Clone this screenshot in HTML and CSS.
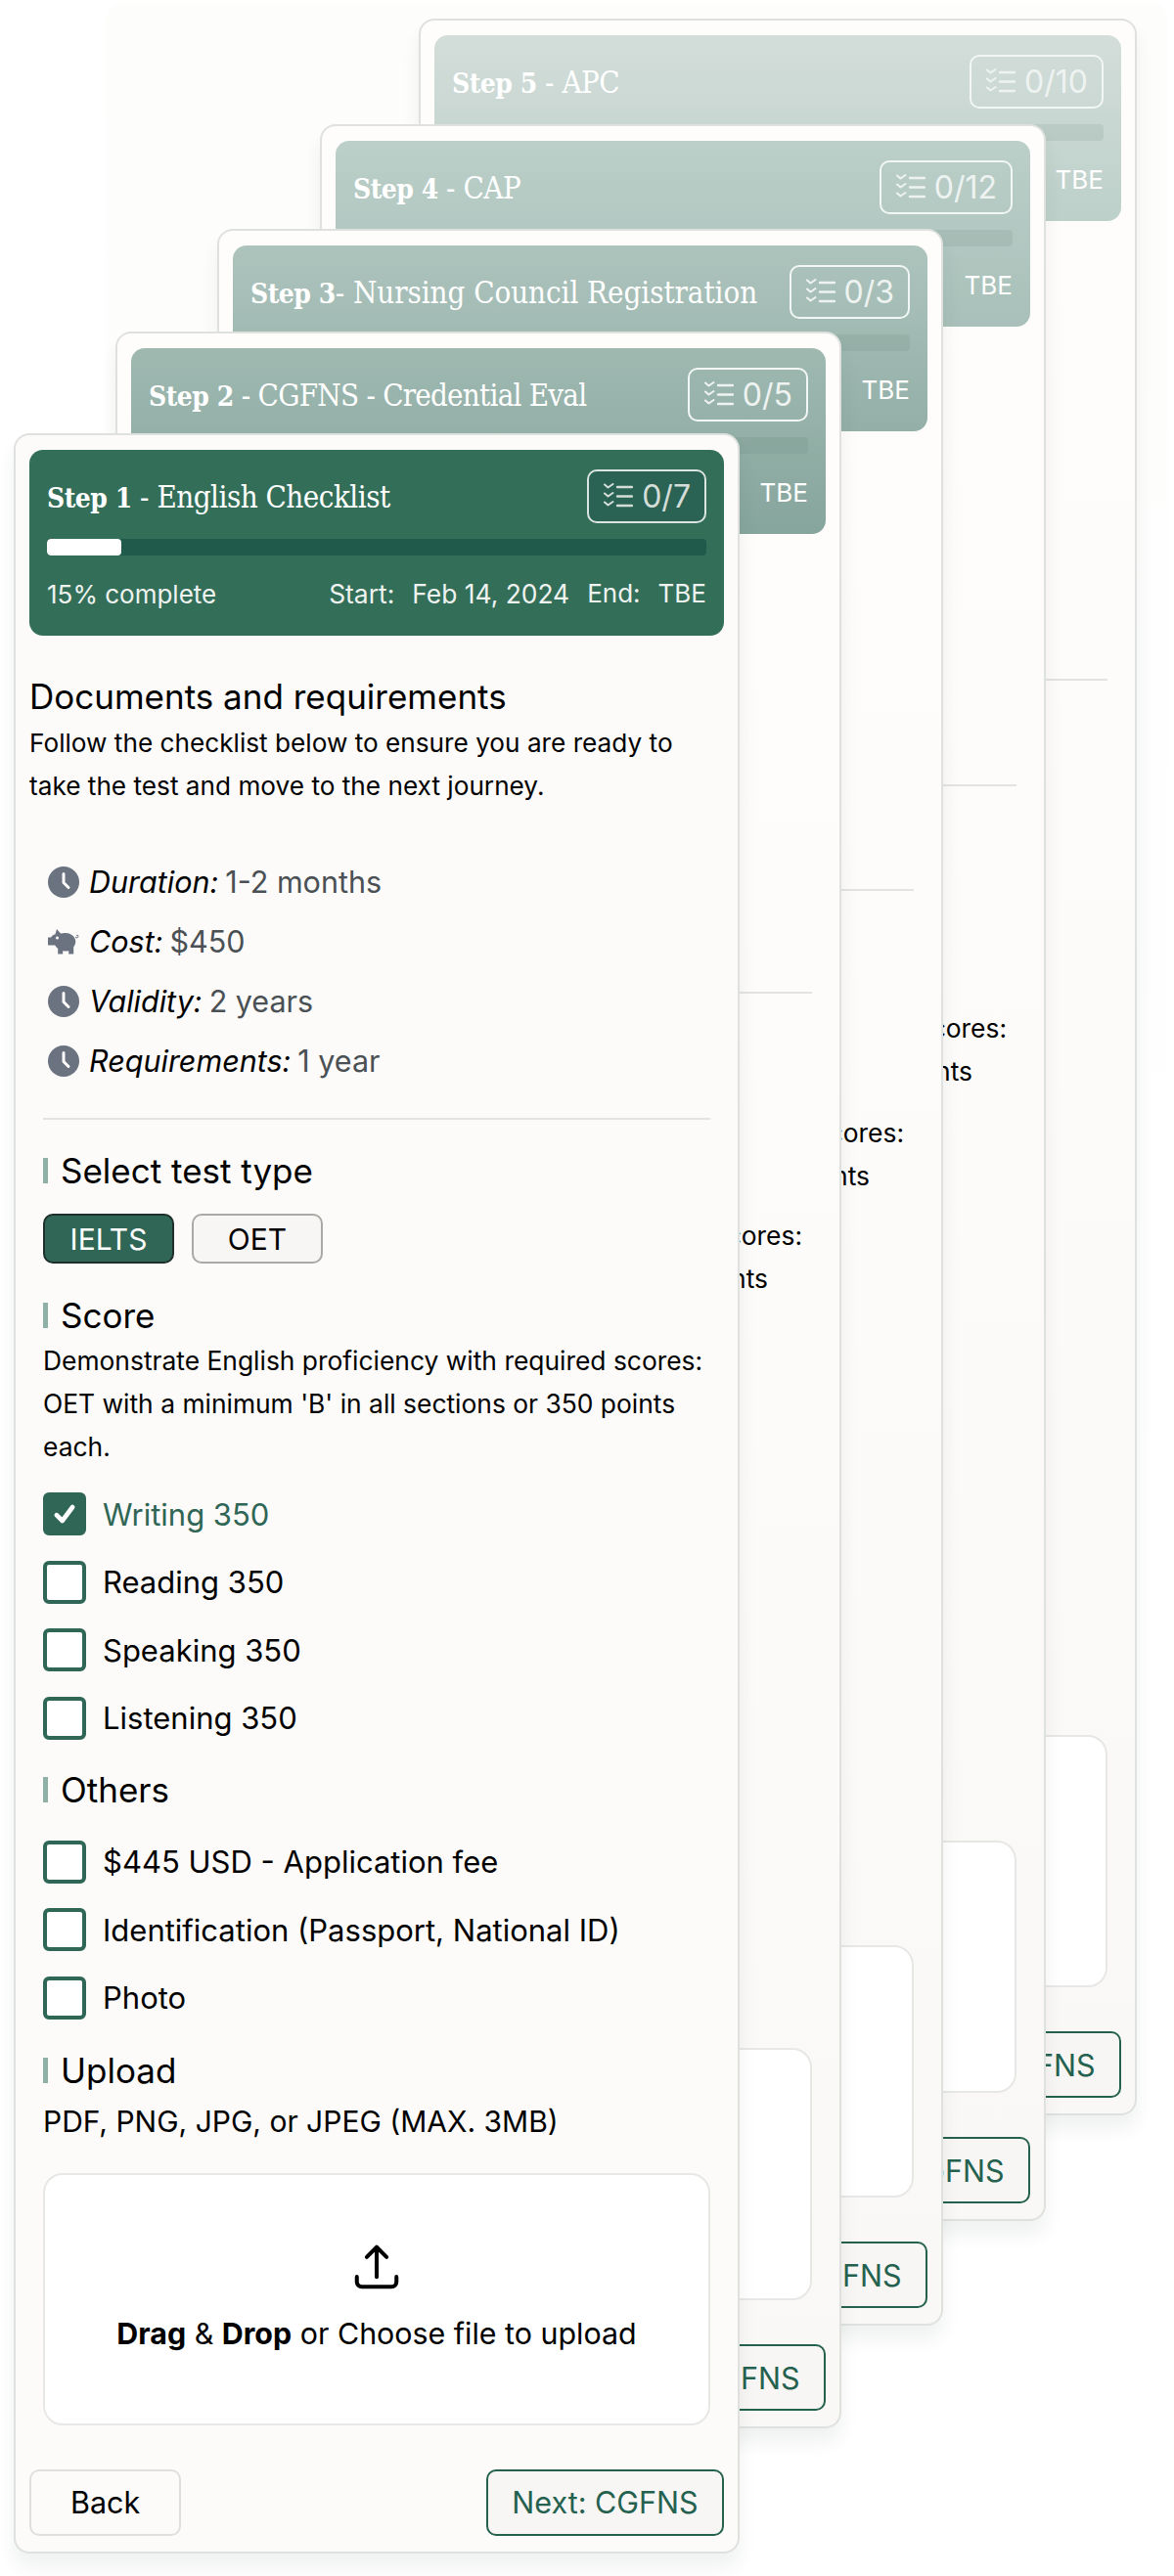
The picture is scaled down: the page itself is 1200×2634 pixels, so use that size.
FILE: index.html
```html
<!DOCTYPE html>
<html lang="en">
<head>
<meta charset="utf-8">
<title>Step checklist</title>
<link rel="stylesheet" href="styles.css">
</head>
<body>
<svg class="defs" width="0" height="0" aria-hidden="true">
  <symbol id="list" viewBox="0 0 31 27">
    <path d="M2 1.5l3.5 3 5-3.5M2 10.500l3.500 3 5-3.500M2 19.500l3.500 3 5-3.500" fill="none" stroke="currentColor" stroke-width="2" stroke-linecap="round" stroke-linejoin="round"/>
    <path d="M15 4h15M15 13.500h15M15 23h15" fill="none" stroke="currentColor" stroke-width="2.400" stroke-linecap="round"/>
  </symbol>
  <symbol id="clock" viewBox="0 0 32 32">
    <circle cx="16" cy="16" r="16" fill="#6b7280"/>
    <path d="M16 7.500V16.500l5 5" fill="none" stroke="#fcfbf9" stroke-width="3" stroke-linecap="round" stroke-linejoin="round"/>
  </symbol>
  <symbol id="pig" viewBox="0 0 32 28">
    <path d="M9 1l4 4.500c1.800-.5 3.800-.7 5.500-.5 4.500.3 8 2.700 9.300 6.300 1 2.900.3 5.700-1.600 8V26.500h-5v-3.300c-2 .5-4 .5-6 .1v3.200h-5v-5.400c-1.400-1-2.400-2.200-3-3.500H0V9.500h3c.9-1.300 2.500-2.600 4.500-3.200z" fill="#6b7280"/>
    <circle cx="9.500" cy="10" r="1.500" fill="#fcfbf9"/>
    <path d="M28 9.500c1.500.8 3 .2 3-1.300 0-1.300-1.800-1.500-2 0" fill="none" stroke="#6b7280" stroke-width="1"/>
  </symbol>
  <symbol id="tick" viewBox="0 0 24 24">
    <path d="M5 13l5 5 9-12" fill="none" stroke="#fff" stroke-width="4" stroke-linecap="round" stroke-linejoin="round"/>
  </symbol>
</svg>

<main class="stack">
  <div class="backdrop"></div>

  <section class="card back s5">
    <header class="head">
      <div class="head-top"><h2 class="title"><b>Step 5</b> - APC</h2><span class="badge"><svg class="badge-icon"><use href="#list"/></svg>0/10</span></div>
      <div class="track"></div>
      <div class="meta"><span>TBE</span></div>
    </header>
    <hr class="rule back-rule">
    <div class="back-para"></div>
    <div class="upload back-upload"></div>
    <footer class="foot"><button class="btn">Back</button><button class="btn next">Next: CGFNS</button></footer>
  </section>

  <section class="card back s4">
    <header class="head">
      <div class="head-top"><h2 class="title"><b>Step 4</b> - CAP</h2><span class="badge"><svg class="badge-icon"><use href="#list"/></svg>0/12</span></div>
      <div class="track"></div>
      <div class="meta"><span>TBE</span></div>
    </header>
    <hr class="rule back-rule">
    <p class="back-para"><span class="tail-one">scores:</span><span class="tail-two">points</span></p>
    <div class="upload back-upload"></div>
    <footer class="foot"><button class="btn">Back</button><button class="btn next">Next: CGFNS</button></footer>
  </section>

  <section class="card back s3">
    <header class="head">
      <div class="head-top"><h2 class="title"><b>Step 3</b>- Nursing Council Registration</h2><span class="badge"><svg class="badge-icon"><use href="#list"/></svg>0/3</span></div>
      <div class="track"></div>
      <div class="meta"><span>TBE</span></div>
    </header>
    <hr class="rule back-rule">
    <p class="back-para"><span class="tail-one">scores:</span><span class="tail-two">points</span></p>
    <div class="upload back-upload"></div>
    <footer class="foot"><button class="btn">Back</button><button class="btn next">Next: CGFNS</button></footer>
  </section>

  <section class="card back s2">
    <header class="head">
      <div class="head-top"><h2 class="title"><b>Step 2</b> - CGFNS - Credential Eval</h2><span class="badge"><svg class="badge-icon"><use href="#list"/></svg>0/5</span></div>
      <div class="track"></div>
      <div class="meta"><span>TBE</span></div>
    </header>
    <hr class="rule back-rule">
    <p class="back-para"><span class="tail-one">scores:</span><span class="tail-two">points</span></p>
    <div class="upload back-upload"></div>
    <footer class="foot"><button class="btn">Back</button><button class="btn next">Next: CGFNS</button></footer>
  </section>

  <section class="card s1">
    <header class="head">
      <div class="head-top"><h2 class="title"><b>Step 1</b> - English Checklist</h2><span class="badge"><svg class="badge-icon"><use href="#list"/></svg>0/7</span></div>
      <div class="track"><div class="fill"></div></div>
      <div class="meta"><span>15% complete</span><span class="meta-right"><span class="start">Start:</span><span class="date">Feb 14, 2024</span><span>End:</span><span>TBE</span></span></div>
    </header>

    <h3 class="doc-title">Documents and requirements</h3>
    <p class="intro">Follow the checklist below to ensure you are ready to take the test and move to the next journey.</p>

    <div class="inner">
      <ul class="facts">
        <li><svg class="fact-icon"><use href="#clock"/></svg><i>Duration:</i><span>1-2 months</span></li>
        <li><svg class="fact-icon"><use href="#pig"/></svg><i>Cost:</i><span>$450</span></li>
        <li><svg class="fact-icon"><use href="#clock"/></svg><i>Validity:</i><span>2 years</span></li>
        <li><svg class="fact-icon"><use href="#clock"/></svg><i>Requirements:</i><span>1 year</span></li>
      </ul>
      <hr class="rule">

      <h4 class="sub first">Select test type</h4>
      <div class="types"><button class="type on">IELTS</button><button class="type">OET</button></div>

      <h4 class="sub">Score</h4>
      <p class="para">Demonstrate English proficiency with required scores: OET with a minimum 'B' in all sections or 350 points each.</p>
      <ul class="checks">
        <li class="done"><span class="box"><svg class="tick"><use href="#tick"/></svg></span>Writing 350</li>
        <li><span class="box"></span>Reading 350</li>
        <li><span class="box"></span>Speaking 350</li>
        <li><span class="box"></span>Listening 350</li>
      </ul>

      <h4 class="sub others">Others</h4>
      <ul class="checks spaced">
        <li><span class="box"></span>$445 USD - Application fee</li>
        <li><span class="box"></span>Identification (Passport, National ID)</li>
        <li><span class="box"></span>Photo</li>
      </ul>

      <h4 class="sub first">Upload</h4>
      <p class="formats">PDF, PNG, JPG, or JPEG (MAX. 3MB)</p>
      <div class="upload">
        <svg class="upload-icon" viewBox="0 0 24 24"><path d="M3 16.500v2.250A2.250 2.250 0 0 0 5.250 21h13.500A2.250 2.250 0 0 0 21 18.750V16.500m-13.500-9L12 3m0 0 4.500 4.500M12 3v13.500" fill="none" stroke="#000" stroke-width="1.800" stroke-linecap="round" stroke-linejoin="round"/></svg>
        <p class="upload-text"><b>Drag</b> &amp; <b>Drop</b> or Choose file to upload</p>
      </div>
    </div>

    <footer class="foot"><button class="btn">Back</button><button class="btn next">Next: CGFNS</button></footer>
  </section>
</main>
</body>
</html>
```

FILE: styles.css
```css
* { box-sizing: border-box; }
html, body { margin: 0; padding: 0; background: #fff; }
body { font-family: Inter, "Liberation Sans", sans-serif; color: #000; }
.defs { position: absolute; }
.stack { position: relative; width: 1200px; height: 2634px; overflow: hidden; }
.backdrop {
  position: absolute; left: 108px; top: 3px; width: 1085px; height: 1500px;
  border-radius: 16px;
  background: linear-gradient(#fdfdfc, #fefefe 60%, #fff);
}

/* cards on the free canvas */
.card {
  position: absolute; width: 742px; padding: 15px 14px 16px;
  background: #fcfbf9;
  border: 2px solid #dfe1df; border-radius: 16px;
  box-shadow: 0 14px 18px rgba(40, 50, 50, .07);
}
.back { background: linear-gradient(#fefdfc, #fcfbf9 50%, #f9f8f6); }
.s1 { left: 14px; top: 443px; }
.s2 { left: 118px; top: 339px; }
.s3 { left: 222px; top: 234px; }
.s4 { left: 327px; top: 127px; }
.s5 { left: 428px; top: 19px; width: 734px; }

/* header */
.head {
  height: 190px; padding: 20px 18px 0;
  background: #336e59; border-radius: 14px; color: #fff;
}
.s2 .head { background: linear-gradient(#9fb9b1, #86a59c); }
.s3 .head { background: linear-gradient(#adc4bd, #93afa7); }
.s4 .head { background: linear-gradient(#bccfc9, #a8c0b9); }
.s5 .head { background: linear-gradient(#d3ddd9, #bdd0ca); }
.head-top { display: flex; justify-content: space-between; align-items: center; height: 55px; }
.title {
  margin: 2px 0 0; font-family: "DejaVu Serif Condensed", "DejaVu Serif", serif;
  font-size: 31px; font-weight: 400; line-height: 40px; white-space: nowrap;
  letter-spacing: -.5px;
}
.s2 .title { letter-spacing: -.76px; }
.s3 .title { letter-spacing: -.05px; }
.title b { font-size: 28px; font-weight: 700; letter-spacing: -.5px; }
.badge {
  display: flex; align-items: center; gap: 9px; height: 55px; padding: 0 14px;
  border: 2px solid #dbe4e0; border-radius: 10px;
  background: #2a6353; color: #d5ddd9; font-size: 32px;
}
.back .badge { background: transparent; border-color: #f2f6f4; color: #eef3f1; }
.badge-icon { width: 31px; height: 27px; flex: none; }
.track { height: 17px; margin-top: 16px; border-radius: 4px; background: #1f5a4b; overflow: hidden; }
.back .track { background: rgba(70, 100, 90, .1); }
.fill { width: 11.300%; height: 100%; background: #fff; border-radius: 4px; }
.meta {
  display: flex; justify-content: space-between; align-items: center;
  height: 44px; margin-top: 17px; font-size: 26px; color: #eef3f0;
}
.back .meta { justify-content: flex-end; color: #fff; }
.meta-right { display: flex; gap: 18px; }
.meta-right .start, .meta-right .date { font-size: 26.400px; }

/* front card body */
.doc-title { margin: 40px 0 0; font-size: 35px; font-weight: 400; line-height: 44px; }
.intro { margin: 4px 0 0; font-size: 26.200px; line-height: 43.500px; }
.inner { padding: 0 14px; }
.facts { list-style: none; margin: 46px 0 0; padding: 0 0 0 5px; }
.facts li { display: flex; align-items: center; gap: 7px; height: 61px; font-size: 30.500px; white-space: nowrap; }
.facts span { color: #4a5054; }
.fact-icon { width: 32px; height: 32px; margin-right: 3px; flex: none; }
.rule { height: 2px; margin: 28px 0 0; border: 0; background: #e3e4e2; }
.sub {
  display: flex; align-items: center; margin: 31px 0 0; height: 44px;
  font-size: 35px; font-weight: 400;
}
.sub.first { margin-top: 30px; }
.sub.others { margin-top: 29px; }
.sub::before { content: ""; width: 5px; height: 26px; margin-right: 13px; background: #8fb0a7; flex: none; }
.types { display: flex; gap: 18px; margin-top: 22px; }
.type {
  width: 134px; height: 51px; padding: 0;
  font: 400 30px Inter, sans-serif; color: #000;
  background: #f8f6f4; border: 2px solid #a9a9a6; border-radius: 10px;
}
.type.on { background: #2f6655; border-color: #1f2f2b; color: #fff; }
.para { margin: 2px 0 0; font-size: 26.400px; line-height: 44px; }
.checks { list-style: none; margin: 25px 0 0; padding: 0; display: flex; flex-direction: column; gap: 25.500px; }
.checks.spaced { margin-top: 30px; }
.checks li { display: flex; align-items: center; gap: 17px; height: 44px; font-size: 31px; white-space: nowrap; }
.checks li.done { color: #2f6655; }
.box {
  display: flex; align-items: center; justify-content: center;
  width: 44px; height: 44px; flex: none;
  background: #fff; border: 4px solid #2f6655; border-radius: 6px;
}
.done .box { background: #2f6655; }
.tick { width: 28px; height: 28px; }
.formats { margin: 8px 0 0; font-size: 30px; line-height: 44px; }
.upload {
  display: flex; flex-direction: column; align-items: center;
  height: 258px; margin-top: 31px; padding-top: 67px;
  background: #fff; border: 2px solid #e7e8e6; border-radius: 20px;
}
.upload-icon { width: 54px; height: 54px; }
.upload-text { margin: 19px 0 0; font-size: 30.400px; line-height: 44px; }
.upload-text b { font-weight: 700; }

/* footer */
.foot { display: flex; justify-content: space-between; margin-top: 45px; }
.btn {
  height: 68px; padding: 0 40px; flex: none;
  font: 400 30.500px Inter, sans-serif; color: #000;
  background: #fcfbf9; border: 2px solid #dfe0de; border-radius: 10px;
}
.btn.next { width: 243px; padding: 0; color: #25614f; background: #f8f6f4; border-color: #25614f; }

/* cards behind the front one */
.back-rule { margin: 468px 14px 0; }
.back-para { height: 132px; margin: 225px 14px 0; font-size: 26.400px; line-height: 44px; text-align: right; }
.tail-one { display: block; padding-right: 10px; }
.tail-two { display: block; padding-right: 45px; }
.back-upload { margin: 721px 14px 0; padding: 0; }
```
